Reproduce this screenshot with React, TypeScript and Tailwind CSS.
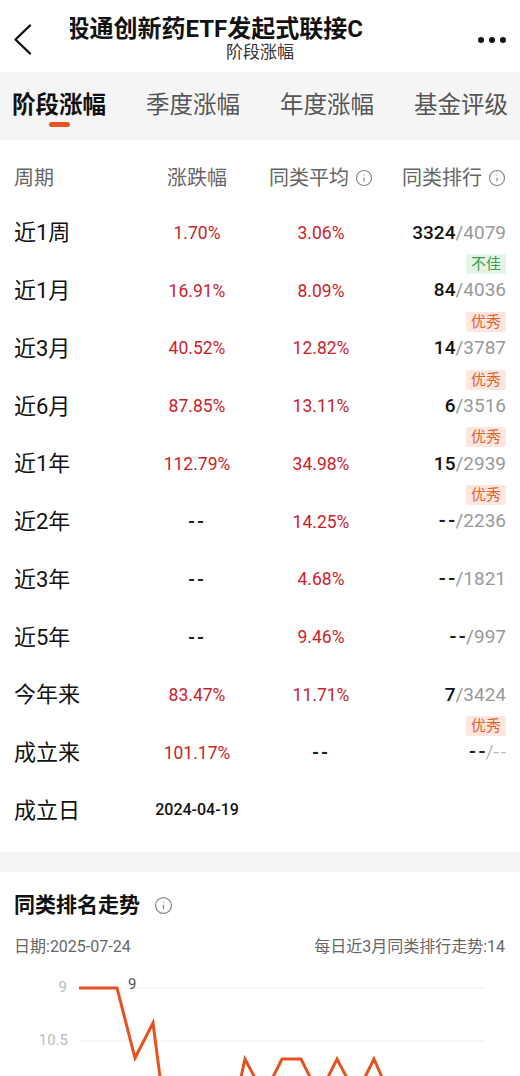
import React from 'react';
import { Info } from 'lucide-react';

type Row = {
    label: string;
    change: string;
    avg: string;
    rank: string;
    total: string;
    badge?: 'good' | 'bad';
};

const rows: Row[] = [
    { label: '近1周', change: '1.70%', avg: '3.06%', rank: '3324', total: '4079', badge: 'bad' },
    { label: '近1月', change: '16.91%', avg: '8.09%', rank: '84', total: '4036', badge: 'good' },
    { label: '近3月', change: '40.52%', avg: '12.82%', rank: '14', total: '3787', badge: 'good' },
    { label: '近6月', change: '87.85%', avg: '13.11%', rank: '6', total: '3516', badge: 'good' },
    { label: '近1年', change: '112.79%', avg: '34.98%', rank: '15', total: '2939', badge: 'good' },
    { label: '近2年', change: '--', avg: '14.25%', rank: '--', total: '2236' },
    { label: '近3年', change: '--', avg: '4.68%', rank: '--', total: '1821' },
    { label: '近5年', change: '--', avg: '9.46%', rank: '--', total: '997' },
    { label: '今年来', change: '83.47%', avg: '11.71%', rank: '7', total: '3424', badge: 'good' },
    { label: '成立来', change: '101.17%', avg: '--', rank: '--', total: '--' },
];

const tabs = ['阶段涨幅', '季度涨幅', '年度涨幅', '基金评级'];

// "--" placeholders are drawn wider and heavier than a plain hyphen pair
const Value = ({ v }: { v: string }) =>
    v === '--' ? (
        <span className="text-[18px] font-bold tracking-[2px] text-[#222]">--</span>
    ) : (
        <span className="text-[17.5px] text-[#cc2229]">{v}</span>
    );

const Badge = ({ kind }: { kind: 'good' | 'bad' }) =>
    kind === 'good' ? (
        <span className="absolute right-[14px] top-[50px] h-[20px] px-[5px] rounded-[2px] bg-[#fde6dd] text-[#e2622f] text-[15px] leading-[20px]">优秀</span>
    ) : (
        <span className="absolute right-[14px] top-[50px] h-[20px] px-[5px] rounded-[2px] bg-[#e3f5e6] text-[#3a9e4a] text-[15px] leading-[20px]">不佳</span>
    );

const App = () => {
    return (
        <div className="w-[520px] h-[1076px] overflow-hidden bg-[#f5f5f5] [font-family:Roboto,'Noto_Sans_CJK_SC',sans-serif]">
            {/* top bar */}
            <div className="h-[72px] bg-white flex">
                <div className="w-[70px] pl-[13px] pt-[24px]">
                    <svg width="20" height="32" viewBox="0 0 20 32" fill="none">
                        <path d="M17 1.5 L2.5 15.5 L17 29.5" stroke="#111" strokeWidth="2.4" strokeLinecap="round" strokeLinejoin="round" />
                    </svg>
                </div>
                <div className="flex-1 flex flex-col items-center pt-[15px]">
                    <div className="self-start w-[293px] overflow-hidden flex justify-end">
                        <span className="shrink-0 whitespace-nowrap text-[24px] leading-[28px] font-bold text-[#111]">汇添富港股通创新药ETF发起式联接C</span>
                    </div>
                    <span className="text-[17px] leading-[19px] text-[#333]">阶段涨幅</span>
                </div>
                <div className="w-[70px] flex items-center justify-end pr-[14px] gap-[5px] pt-[8px]">
                    <span className="w-[6px] h-[6px] rounded-full bg-[#111]" />
                    <span className="w-[6px] h-[6px] rounded-full bg-[#111]" />
                    <span className="w-[6px] h-[6px] rounded-full bg-[#111]" />
                </div>
            </div>

            {/* tabs */}
            <div className="h-[68px] flex px-[12px] gap-[40px]">
                {tabs.map((t, i) => (
                    <div key={t} className="shrink-0 flex flex-col items-center pt-[17px]">
                        <span className={i === 0 ? 'whitespace-nowrap text-[23.5px] leading-[32px] font-bold text-[#111]' : 'whitespace-nowrap text-[23.5px] leading-[32px] text-[#555]'}>{t}</span>
                        {i === 0 && <span className="mt-[1px] w-[21px] h-[5px] rounded-full bg-[#e8541e]" />}
                    </div>
                ))}
            </div>

            {/* table */}
            <div className="bg-white pt-[12px] pb-[13px]">
                <div className="grid grid-cols-[120px_126px_122px_1fr] items-center h-[52px] px-[14px] text-[20px] text-[#666]">
                    <span>周期</span>
                    <span className="text-center">涨跌幅</span>
                    <span className="flex items-center justify-center gap-[6px]">
                        同类平均
                        <Info size={18} strokeWidth={1.6} className="text-[#888]" />
                    </span>
                    <span className="flex items-center justify-end gap-[6px]">
                        同类排行
                        <Info size={18} strokeWidth={1.6} className="text-[#888]" />
                    </span>
                </div>

                {rows.map((r) => (
                    <div key={r.label} className="relative grid grid-cols-[120px_126px_122px_1fr] items-center h-[57.75px] px-[14px]">
                        <span className="text-[22px] text-[#111]">{r.label}</span>
                        <span className="text-center"><Value v={r.change} /></span>
                        <span className="text-center"><Value v={r.avg} /></span>
                        <span className="text-right text-[19px]">
                            {r.rank === '--' ? (
                                <span className="font-bold tracking-[2px] mr-[-2px] text-[#222]">--</span>
                            ) : (
                                <span className="font-medium text-[#111]">{r.rank}</span>
                            )}
                            {r.total === '--' ? (
                                <span className="text-[#bbb]">/<span className="tracking-[2px] mr-[-2px]">--</span></span>
                            ) : (
                                <span className="text-[#999]">/{r.total}</span>
                            )}
                        </span>
                        {r.badge && <Badge kind={r.badge} />}
                    </div>
                ))}

                <div className="grid grid-cols-[120px_126px_122px_1fr] items-center h-[57.75px] px-[14px]">
                    <span className="text-[22px] text-[#111]">成立日</span>
                    <span className="text-center text-[16px] font-medium text-[#111]">2024-04-19</span>
                </div>
            </div>

            {/* rank trend */}
            <div className="mt-[20px] bg-white h-[300px] pt-[19px]">
                <div className="flex items-center px-[14px] gap-[14px]">
                    <span className="text-[21px] leading-[28px] font-bold text-[#111]">同类排名走势</span>
                    <Info size={19} strokeWidth={1.6} className="text-[#888]" />
                </div>
                <div className="mt-[17px] flex justify-between px-[14px] pr-[15px] text-[16px] leading-[22px] text-[#666]">
                    <span>日期:2025-07-24</span>
                    <span>每日近3月同类排行走势:14</span>
                </div>
                <svg width="520" height="160" viewBox="0 0 520 160" className="block">
                    <line x1="79" y1="30" x2="485" y2="30" stroke="#eeeeee" strokeWidth="1" />
                    <line x1="79" y1="83" x2="485" y2="83" stroke="#eeeeee" strokeWidth="1" />
                    <text x="67" y="30" textAnchor="end" dominantBaseline="middle" fontSize="15" fill="#bbbbbb">9</text>
                    <text x="68" y="83" textAnchor="end" dominantBaseline="middle" fontSize="15" fill="#bbbbbb">10.5</text>
                    <text x="128" y="27" dominantBaseline="middle" fontSize="15" fill="#555555">9</text>
                    <polyline
                        points="79,30 117,30 135,100 153,65 163,142 236,142 245,101 264,137 282,101 301,101 319,137 337,101 356,137 374,101 392,142 485,142"
                        fill="none"
                        stroke="#e4531f"
                        strokeWidth="3"
                        strokeLinejoin="miter"
                    />
                </svg>
            </div>
        </div>
    );
};

export default App;
